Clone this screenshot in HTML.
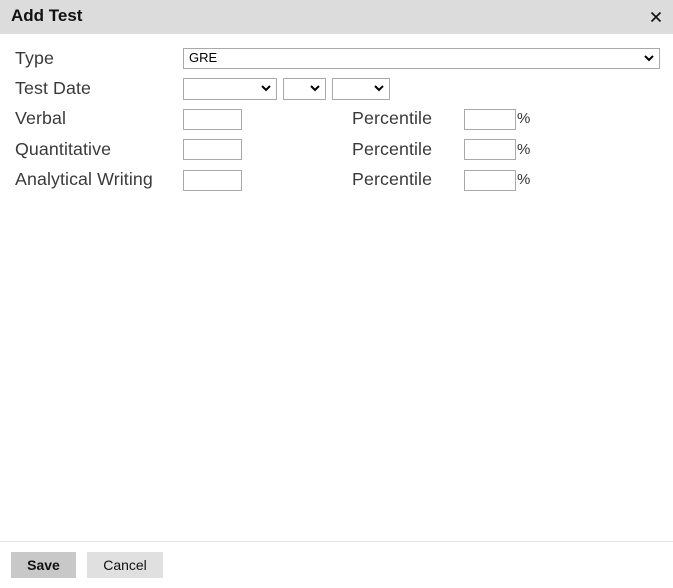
<!DOCTYPE html>
<html><head><style>
*{box-sizing:border-box;margin:0;padding:0}
body{width:673px;height:588px;background:#fff;font-family:"Liberation Sans",sans-serif;position:relative;overflow:hidden;color:#333}
.hdr{position:absolute;left:0;top:0;width:673px;height:34px;background:#dcdcdc}
.hdr b{position:absolute;left:11px;top:6px;font-size:17px;color:#111}
.x{position:absolute;left:650px;top:11px}
.l,.p{position:absolute;font-size:17.8px;color:#3a3a3a;letter-spacing:0.1px}
.l{left:15px}
.p{left:352px}
.b{position:absolute;border:1px solid #a9a9a9;background:#fff}
.s{position:absolute;border:1px solid #a9a9a9;background:#fff;font-size:13px;color:#000;padding-left:5px;line-height:18px}
.s svg{position:absolute;right:5px;top:6px}
.pc{position:absolute;left:517px;font-size:15px;color:#333}
.line{position:absolute;left:0;top:541px;width:673px;height:1px;background:#e6e6e6}
.btn{position:absolute;top:552px;height:26px;font-size:14px;line-height:26px;text-align:center;color:#111}
</style></head><body>
<div class="hdr"><b>Add Test</b><svg class="x" width="12" height="12" viewBox="0 0 12 12"><path d="M1.5 1.5l9 9M10.5 1.5l-9 9" stroke="#111" stroke-width="1.6"/></svg></div>
<div class="l" style="top:48px">Type</div>
<div class="l" style="top:78px">Test Date</div>
<div class="l" style="top:108px">Verbal</div>
<div class="l" style="top:139px">Quantitative</div>
<div class="l" style="top:169px">Analytical Writing</div>
<div class="s" style="left:183px;top:48px;width:477px;height:21px">GRE<svg width="10" height="7" viewBox="0 0 10 7"><path d="M1 1l4 4 4-4" stroke="#000" stroke-width="2" fill="none"/></svg></div>
<div class="s" style="left:183px;top:78px;width:94px;height:22px"><svg width="10" height="7" viewBox="0 0 10 7"><path d="M1 1l4 4 4-4" stroke="#000" stroke-width="2" fill="none"/></svg></div>
<div class="s" style="left:283px;top:78px;width:43px;height:22px"><svg width="10" height="7" viewBox="0 0 10 7"><path d="M1 1l4 4 4-4" stroke="#000" stroke-width="2" fill="none"/></svg></div>
<div class="s" style="left:332px;top:78px;width:58px;height:22px"><svg width="10" height="7" viewBox="0 0 10 7"><path d="M1 1l4 4 4-4" stroke="#000" stroke-width="2" fill="none"/></svg></div>
<div class="b" style="left:183px;top:109px;width:59px;height:21px"></div>
<div class="b" style="left:183px;top:139px;width:59px;height:21px"></div>
<div class="b" style="left:183px;top:170px;width:59px;height:21px"></div>
<div class="p" style="top:108px">Percentile</div>
<div class="p" style="top:139px">Percentile</div>
<div class="p" style="top:169px">Percentile</div>
<div class="b" style="left:464px;top:109px;width:52px;height:21px"></div>
<div class="b" style="left:464px;top:139px;width:52px;height:21px"></div>
<div class="b" style="left:464px;top:170px;width:52px;height:21px"></div>
<div class="pc" style="top:110px">%</div>
<div class="pc" style="top:141px">%</div>
<div class="pc" style="top:171px">%</div>
<div class="line"></div>
<div class="btn" style="left:11px;width:65px;background:#c8c8c8;font-weight:bold">Save</div>
<div class="btn" style="left:87px;width:76px;background:#e0e0e0">Cancel</div>
</body></html>
